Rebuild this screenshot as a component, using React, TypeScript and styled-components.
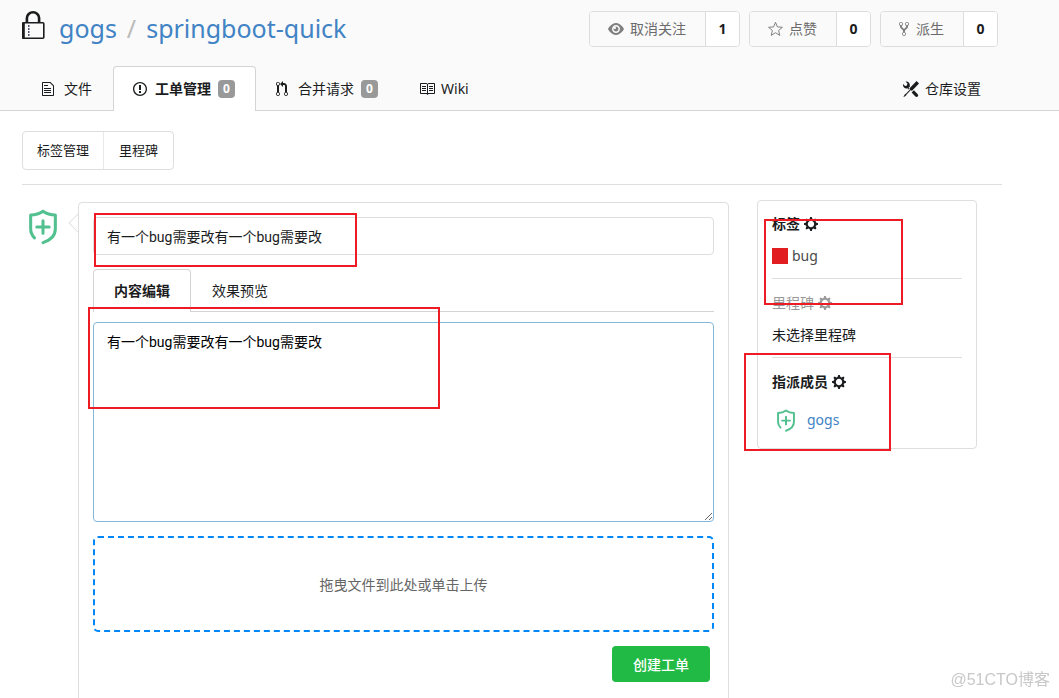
import React from "react";
import styled, { createGlobalStyle } from "styled-components";

const GlobalStyle = createGlobalStyle`
  *, *::before, *::after { box-sizing: border-box; }
  body {
    margin: 0;
    background: #fff;
    color: #1b1c1d;
    font: 14px/20px "Noto Sans", "Noto Sans CJK SC", sans-serif;
    overflow: hidden;
  }
  button, input, textarea { font-family: inherit; margin: 0; }
  a { color: #4183c4; text-decoration: none; }
`;

const Page = styled.div`
  position: relative;
  min-height: 100vh;
  overflow: hidden;
`;

const Header = styled.header`
  padding: 11px 57px 0 22px;
  background: #fafafa;
  border-bottom: 1px solid #d4d4d5;
`;

const TitleRow = styled.div`
  display: flex;
  align-items: flex-start;
  justify-content: space-between;
  height: 55px;
`;

const RepoTitle = styled.h1`
  display: flex;
  align-items: flex-start;
  gap: 14px;
  margin: 0;
  font-size: 25px;
  line-height: 34px;
  font-weight: 400;
`;

const RepoPath = styled.span`
  display: flex;
  gap: 10px;
`;

const Slash = styled.span`
  color: #bbb;
`;

const Actions = styled.div`
  display: flex;
  gap: 9px;
  padding-right: 4px;
`;

const LabeledButton = styled.div`
  display: flex;
  height: 36px;
  border: 1px solid #dcdddd;
  border-radius: 4px;
  overflow: hidden;
`;

const ActionButton = styled.button`
  display: flex;
  align-items: center;
  gap: 6px;
  padding: 0 19px 0 18px;
  border: 0;
  background: #fafafa;
  color: #6b6b6b;
  font-size: 14px;
  line-height: 20px;
  svg { color: #808080; }
`;

const ActionCount = styled.a`
  width: 34px;
  border-left: 1px solid #dcdddd;
  background: #fff;
  color: #1b1c1d;
  font-weight: 700;
  line-height: 34px;
  text-align: center;
`;

const TabBar = styled.nav`
  display: flex;
  height: 45px;
  margin-bottom: -1px;
`;

const Tab = styled.a<{ $active?: boolean; $end?: boolean }>`
  display: flex;
  align-items: center;
  gap: 6px;
  padding: 0 20px 0 19px;
  margin-left: ${(p) => (p.$end ? "auto" : "0")};
  border: 1px solid ${(p) => (p.$active ? "#d4d4d5" : "transparent")};
  border-bottom: 0;
  border-radius: 4px 4px 0 0;
  background: ${(p) => (p.$active ? "#fff" : "transparent")};
  color: #1b1c1d;
  font-weight: ${(p) => (p.$active ? 700 : 400)};
`;

const IconBox = styled.span<{ $w?: number }>`
  display: flex;
  flex: none;
  width: ${(p) => p.$w ?? 16}px;
`;

const Badge = styled.span`
  width: 17px;
  height: 18px;
  margin-left: 1px;
  border-radius: 4px;
  background: #999;
  color: #fff;
  font-size: 12px;
  line-height: 18px;
  font-weight: 700;
  text-align: center;
`;

const Content = styled.main`
  padding: 20px 57px 0 22px;
`;

const SubNav = styled.div`
  display: flex;
  width: max-content;
  height: 39px;
  border: 1px solid #dededf;
  border-radius: 4px;
`;

const SubNavLink = styled.a`
  padding: 0 14px;
  color: #1b1c1d;
  font-size: 13px;
  line-height: 37px;
  & + & {
    padding: 0 15px;
    border-left: 1px solid #e8e8e9;
  }
`;

const Rule = styled.hr<{ $space: string }>`
  height: 1px;
  margin: ${(p) => p.$space};
  border: 0;
  background: #dededf;
`;

const Columns = styled.div`
  display: flex;
  align-items: flex-start;
  gap: 28px;
  padding-right: 25px;
`;

const Composer = styled.form`
  display: flex;
  flex: 1;
  min-width: 0;
  padding-top: 2px;
`;

const AvatarLink = styled.a`
  flex: none;
  width: 56px;
  padding: 5px 0 0 3px;
`;

const Panel = styled.div`
  position: relative;
  flex: 1;
  min-width: 0;
  min-height: 520px;
  padding: 14px;
  border: 1px solid #dededf;
  border-radius: 4px;
  &::before {
    content: "";
    position: absolute;
    left: -8px;
    top: 13px;
    width: 14px;
    height: 14px;
    border: solid #dededf;
    border-width: 0 0 1px 1px;
    background: #fff;
    clip-path: polygon(0 0, 100% 100%, 0 100%);
    transform: rotate(45deg);
  }
`;

const TitleInput = styled.input`
  display: block;
  width: 100%;
  height: 38px;
  padding: 0 13px 1px;
  border: 1px solid #dededf;
  border-radius: 4px;
  outline: 0;
  color: #1b1c1d;
  && { font: 14px/20px Roboto, "Noto Sans CJK SC", sans-serif; }
`;

const EditorTabs = styled.div`
  display: flex;
  height: 43px;
  margin-top: 14px;
  border-bottom: 1px solid #d4d4d5;
`;

const EditorTab = styled.button<{ $active?: boolean }>`
  height: 43px;
  padding: 0 20px;
  border: 1px solid ${(p) => (p.$active ? "#d4d4d5" : "transparent")};
  border-bottom: 0;
  border-radius: 4px 4px 0 0;
  background: ${(p) => (p.$active ? "#fff" : "transparent")};
  color: #1b1c1d;
  font-size: 14px;
  line-height: 20px;
  font-weight: ${(p) => (p.$active ? 700 : 400)};
`;

const Editor = styled.textarea`
  display: block;
  width: 100%;
  height: 200px;
  margin-top: 10px;
  padding: 9px 13px;
  border: 1px solid #85b7d9;
  border-radius: 4px;
  outline: 0;
  resize: vertical;
  color: #000;
  && { font: 14px/20px Roboto, "Noto Sans CJK SC", sans-serif; }
`;

const DropZone = styled.button`
  display: block;
  width: 100%;
  height: 96px;
  margin-top: 14px;
  border: 2px dashed #0087f7;
  border-radius: 5px;
  background: #fff;
  color: #666;
  font-size: 14px;
`;

const SubmitRow = styled.div`
  display: flex;
  justify-content: flex-end;
  padding: 14px 4px 0 0;
`;

const SubmitButton = styled.button`
  height: 36px;
  padding: 0 21px;
  border: 0;
  border-radius: 4px;
  background: #21ba45;
  color: #fff;
  font-size: 14px;
  font-weight: 500;
`;

const Sidebar = styled.aside`
  position: relative;
  flex: none;
  width: 220px;
  padding: 13px 14px 10px;
  border: 1px solid #dededf;
  border-radius: 4px;
`;

const MetaHeading = styled.div<{ $muted?: boolean }>`
  display: flex;
  align-items: center;
  gap: 4px;
  height: 20px;
  color: ${(p) => (p.$muted ? "#999" : "#1b1c1d")};
  font-weight: ${(p) => (p.$muted ? 400 : 700)};
`;

const MetaItem = styled.div<{ $tall?: boolean }>`
  display: flex;
  align-items: center;
  gap: 10px;
  height: ${(p) => (p.$tall ? "37px" : "25px")};
  margin-top: 9px;
  padding-left: ${(p) => (p.$tall ? "3px" : "0")};
`;

const LabelLink = styled.a`
  display: flex;
  align-items: center;
  gap: 4px;
  color: #4a4a4a;
`;

const Swatch = styled.span`
  width: 16px;
  height: 16px;
  background: #e11d21;
`;

const Highlight = styled.div<{ $x: number; $y: number; $w: number; $h: number }>`
  position: absolute;
  left: ${(p) => p.$x}px;
  top: ${(p) => p.$y}px;
  width: ${(p) => p.$w}px;
  height: ${(p) => p.$h}px;
  border: 2px solid #ed1c24;
  pointer-events: none;
`;

const Watermark = styled.div`
  position: fixed;
  right: 9px;
  bottom: 8px;
  color: #c8c8c8;
  font: 16px/20px "Liberation Sans", "Noto Sans CJK SC", sans-serif;
`;

const GLYPHS = {
  eye: [16, "M8.06 2C3 2 0 8 0 8s3 6 8.06 6C13 14 16 8 16 8s-3-6-7.94-6zM8 12c-2.2 0-4-1.78-4-4 0-2.2 1.8-4 4-4 2.22 0 4 1.8 4 4 0 2.22-1.78 4-4 4zm2.500-4c0 1.380-1.120 2.500-2.500 2.500S5.500 9.380 5.500 8c0-.3.05-.6.15-.85.25.5.7.85 1.250.85C7.600 8 8 7.500 8 6.900c0-.5-.3-.95-.75-1.200.24-.13.500-.2.750-.2 1.380 0 2.500 1.120 2.500 2.500z"],
  fork: [10, "M8 1a1.993 1.993 0 0 0-1 3.72V6L5 8 3 6V4.72A1.993 1.993 0 0 0 2 1a1.993 1.993 0 0 0-1 3.72V6.5l3 3v1.78A1.993 1.993 0 0 0 5 15a1.993 1.993 0 0 0 1-3.72V9.5l3-3V4.72A1.993 1.993 0 0 0 8 1zM2 4.2C1.34 4.2.8 3.65.8 3c0-.65.55-1.2 1.2-1.2.65 0 1.2.55 1.2 1.2 0 .65-.55 1.2-1.2 1.2zm3 10c-.66 0-1.2-.55-1.2-1.2 0-.65.55-1.2 1.2-1.2.65 0 1.2.55 1.2 1.2 0 .65-.55 1.2-1.2 1.2zm3-10c-.66 0-1.2-.55-1.2-1.2 0-.65.55-1.2 1.2-1.2.65 0 1.2.55 1.2 1.2 0 .65-.55 1.2-1.2 1.2z"],
  file: [12, "M6 5H2V4h4v1zM2 8h7V7H2v1zm0 2h7V9H2v1zm0 2h7v-1H2v1zm10-7.5V14c0 .55-.45 1-1 1H1c-.55 0-1-.45-1-1V2c0-.55.45-1 1-1h7.5L12 4.5zM11 5L8 2H1v12h10V5z"],
  issue: [14, "M7 2.3c3.14 0 5.7 2.56 5.7 5.7s-2.56 5.7-5.7 5.7A5.71 5.71 0 0 1 1.3 8c0-3.14 2.56-5.7 5.7-5.7zM7 1C3.14 1 0 4.14 0 8s3.14 7 7 7 7-3.14 7-7-3.14-7-7-7zm1 3H6v5h2V4zm0 6H6v2h2v-2z"],
  pull: [12, "M11 11.28V5c-.03-.78-.34-1.47-.94-2.06C9.46 2.35 8.78 2.03 8 2H7V0L4 3l3 3V4h1c.27.02.48.11.69.31.21.2.3.42.31.69v6.28A1.993 1.993 0 0 0 10 15a1.993 1.993 0 0 0 1-3.72zm-1 2.92c-.66 0-1.2-.55-1.2-1.2 0-.65.55-1.2 1.2-1.2.65 0 1.2.55 1.2 1.2 0 .65-.55 1.2-1.2 1.2zM4 3c0-1.11-.89-2-2-2a1.993 1.993 0 0 0-1 3.72v6.56A1.993 1.993 0 0 0 2 15a1.993 1.993 0 0 0 1-3.72V4.72c.59-.34 1-.98 1-1.72zm-.8 10c0 .66-.55 1.2-1.2 1.2-.65 0-1.2-.55-1.2-1.2 0-.65.55-1.2 1.2-1.2.65 0 1.2.55 1.2 1.2zM2 4.2C1.34 4.2.8 3.65.8 3c0-.65.55-1.2 1.2-1.2.65 0 1.2.55 1.2 1.2 0 .65-.55 1.2-1.2 1.2z"],
  book: [16, "M3 5h4v1H3V5zm0 3h4V7H3v1zm0 2h4V9H3v1zm11-5h-4v1h4V5zm0 2h-4v1h4V7zm0 2h-4v1h4V9zm2-6v9c0 .55-.45 1-1 1H9.500l-1 1-1-1H2c-.55 0-1-.45-1-1V3c0-.55.45-1 1-1h5.500l1 1 1-1H15c.55 0 1 .45 1 1zm-8 .5L7.500 3H2v9h6V3.500zm7-.5H9.500l-.5.5V12h6V3z"],
  tools: [16, "M4.48 7.27c.26.26 1.28 1.33 1.28 1.33l.56-.58-.88-.91 1.69-1.8s-.76-.74-.43-.45c.32-1.19.03-2.51-.87-3.44C4.93.5 3.66.2 2.52.51l1.93 2-.51 1.96-1.89.52-1.93-1.99C-.19 4.17.1 5.48 1 6.4c.94.98 2.29 1.26 3.48.87zm6.44 1.94l-2.33 2.3 3.84 3.98c.31.33.73.49 1.14.49.41 0 .82-.16 1.14-.49.63-.65.63-1.7 0-2.35l-3.79-3.93zM16 2.53L13.55 0 6.33 7.46l.88.91-4.31 4.46-.99.53-1.39 2.27.35.37 2.2-1.44.51-1.02L7.9 9.08l.88.91L16 2.53z"],
  gear: [14, "M14 8.77v-1.6l-1.94-.64-.45-1.09.88-1.84-1.13-1.13-1.81.91-1.09-.45-.69-1.92h-1.6l-.63 1.94-1.11.45-1.84-.88-1.13 1.13.91 1.81-.45 1.09L0 7.23v1.59l1.94.64.45 1.09-.88 1.84 1.13 1.13 1.81-.91 1.09.45.69 1.92h1.59l.63-1.94 1.11-.45 1.84.88 1.13-1.13-.92-1.81.47-1.09L14 8.75v.02zM7 11.2c-1.77 0-3.2-1.43-3.2-3.2s1.43-3.2 3.2-3.2 3.2 1.43 3.2 3.2-1.43 3.2-3.2 3.2z"],
} as const;

function Glyph({ name }: { name: keyof typeof GLYPHS }) {
  const [w, d] = GLYPHS[name];
  return (
    <svg width={w} height="16" viewBox={`0 0 ${w} 16`} fill="currentColor" aria-hidden="true">
      <path fillRule="evenodd" d={d} />
    </svg>
  );
}

function Lock() {
  return (
    <svg width="23" height="29" viewBox="0 0 23 29" aria-hidden="true">
      <path d="M4.900 12V7a6.100 5.700 0 0 1 12.200 0v5" fill="none" stroke="#1b1c1d" strokeWidth="2.600" />
      <rect x="0.500" y="11.700" width="21.300" height="15.600" rx="1" fill="#fafafa" stroke="#1b1c1d" strokeWidth="1.600" />
      <path d="M1.400 12v15" stroke="#1b1c1d" strokeWidth="2.800" />
      <path d="M6 15h1.500M6 18h1.500M6 21h1.500M6 24h1.500" stroke="#1b1c4d" strokeWidth="1.500" />
    </svg>
  );
}

function Star() {
  return (
    <svg width="15" height="16" viewBox="0 0 15 16" fill="none" stroke="currentColor" strokeLinejoin="round" aria-hidden="true">
      <path d="M7.500 1.300l1.900 4.600 5 .4-3.800 3.200 1.200 4.900-4.300-2.700-4.300 2.700 1.200-4.900L.6 6.300l5-.4z" />
    </svg>
  );
}

function Shield({ w, h }: { w: number; h: number }) {
  return (
    <svg width={w} height={h} viewBox="0 0 36 40" fill="none" stroke="#52c08f" strokeWidth="3.200" strokeLinecap="round" strokeLinejoin="round" aria-hidden="true">
      <path d="M9 32.500C6.500 30 5 27 5 23V8.500c5 0 9-1 13-4 4 3 8 4 13 4V23c0 7-5 12-13 14.500" />
      <path d="M18 14.500v13M11.500 21h13" />
    </svg>
  );
}

export default function App() {
  return (
    <Page>
      <GlobalStyle />
      <Header>
        <TitleRow>
          <RepoTitle>
            <Lock />
            <RepoPath>
              <a href="#owner">gogs</a>
              <Slash>/</Slash>
              <a href="#repo">springboot-quick</a>
            </RepoPath>
          </RepoTitle>
          <Actions>
            <LabeledButton>
              <ActionButton type="button"><Glyph name="eye" />取消关注</ActionButton>
              <ActionCount href="#watchers">1</ActionCount>
            </LabeledButton>
            <LabeledButton>
              <ActionButton type="button"><Star />点赞</ActionButton>
              <ActionCount href="#stars">0</ActionCount>
            </LabeledButton>
            <LabeledButton>
              <ActionButton type="button"><IconBox $w={11}><Glyph name="fork" /></IconBox>派生</ActionButton>
              <ActionCount href="#forks">0</ActionCount>
            </LabeledButton>
          </Actions>
        </TitleRow>
        <TabBar>
          <Tab href="#files"><IconBox><Glyph name="file" /></IconBox>文件</Tab>
          <Tab href="#issues" $active>
            <IconBox><Glyph name="issue" /></IconBox>工单管理<Badge>0</Badge>
          </Tab>
          <Tab href="#pulls">
            <IconBox><Glyph name="pull" /></IconBox>合并请求<Badge>0</Badge>
          </Tab>
          <Tab href="#wiki"><IconBox><Glyph name="book" /></IconBox>Wiki</Tab>
          <Tab href="#settings" $end><IconBox><Glyph name="tools" /></IconBox>仓库设置</Tab>
        </TabBar>
      </Header>

      <Content>
        <SubNav>
          <SubNavLink href="#labels">标签管理</SubNavLink>
          <SubNavLink href="#milestones">里程碑</SubNavLink>
        </SubNav>
        <Rule $space="14px 0 15px" />
        <Columns>
          <Composer onSubmit={(e) => e.preventDefault()}>
            <AvatarLink href="#me" aria-label="gogs"><Shield w={36} h={38} /></AvatarLink>
            <Panel>
              <TitleInput aria-label="标题" defaultValue="有一个bug需要改有一个bug需要改" />
              <EditorTabs>
                <EditorTab type="button" $active>内容编辑</EditorTab>
                <EditorTab type="button">效果预览</EditorTab>
              </EditorTabs>
              <Editor aria-label="内容" defaultValue="有一个bug需要改有一个bug需要改" />
              <DropZone type="button">拖曳文件到此处或单击上传</DropZone>
              <SubmitRow>
                <SubmitButton type="submit">创建工单</SubmitButton>
              </SubmitRow>
              <Highlight $x={15} $y={10} $w={263} $h={54} />
              <Highlight $x={9} $y={104} $w={352} $h={102} />
            </Panel>
          </Composer>

          <Sidebar>
            <MetaHeading>标签<Glyph name="gear" /></MetaHeading>
            <MetaItem><LabelLink href="#bug"><Swatch />bug</LabelLink></MetaItem>
            <Rule $space="10px 0 14px" />
            <MetaHeading $muted>里程碑<Glyph name="gear" /></MetaHeading>
            <MetaItem>未选择里程碑</MetaItem>
            <Rule $space="10px 0 14px" />
            <MetaHeading>指派成员<Glyph name="gear" /></MetaHeading>
            <MetaItem $tall>
              <Shield w={22} h={26} />
              <a href="#gogs">gogs</a>
            </MetaItem>
            <Highlight $x={6} $y={18} $w={139} $h={86} />
            <Highlight $x={-14} $y={152} $w={147} $h={98} />
          </Sidebar>
        </Columns>
      </Content>
      <Watermark>@51CTO博客</Watermark>
    </Page>
  );
}
